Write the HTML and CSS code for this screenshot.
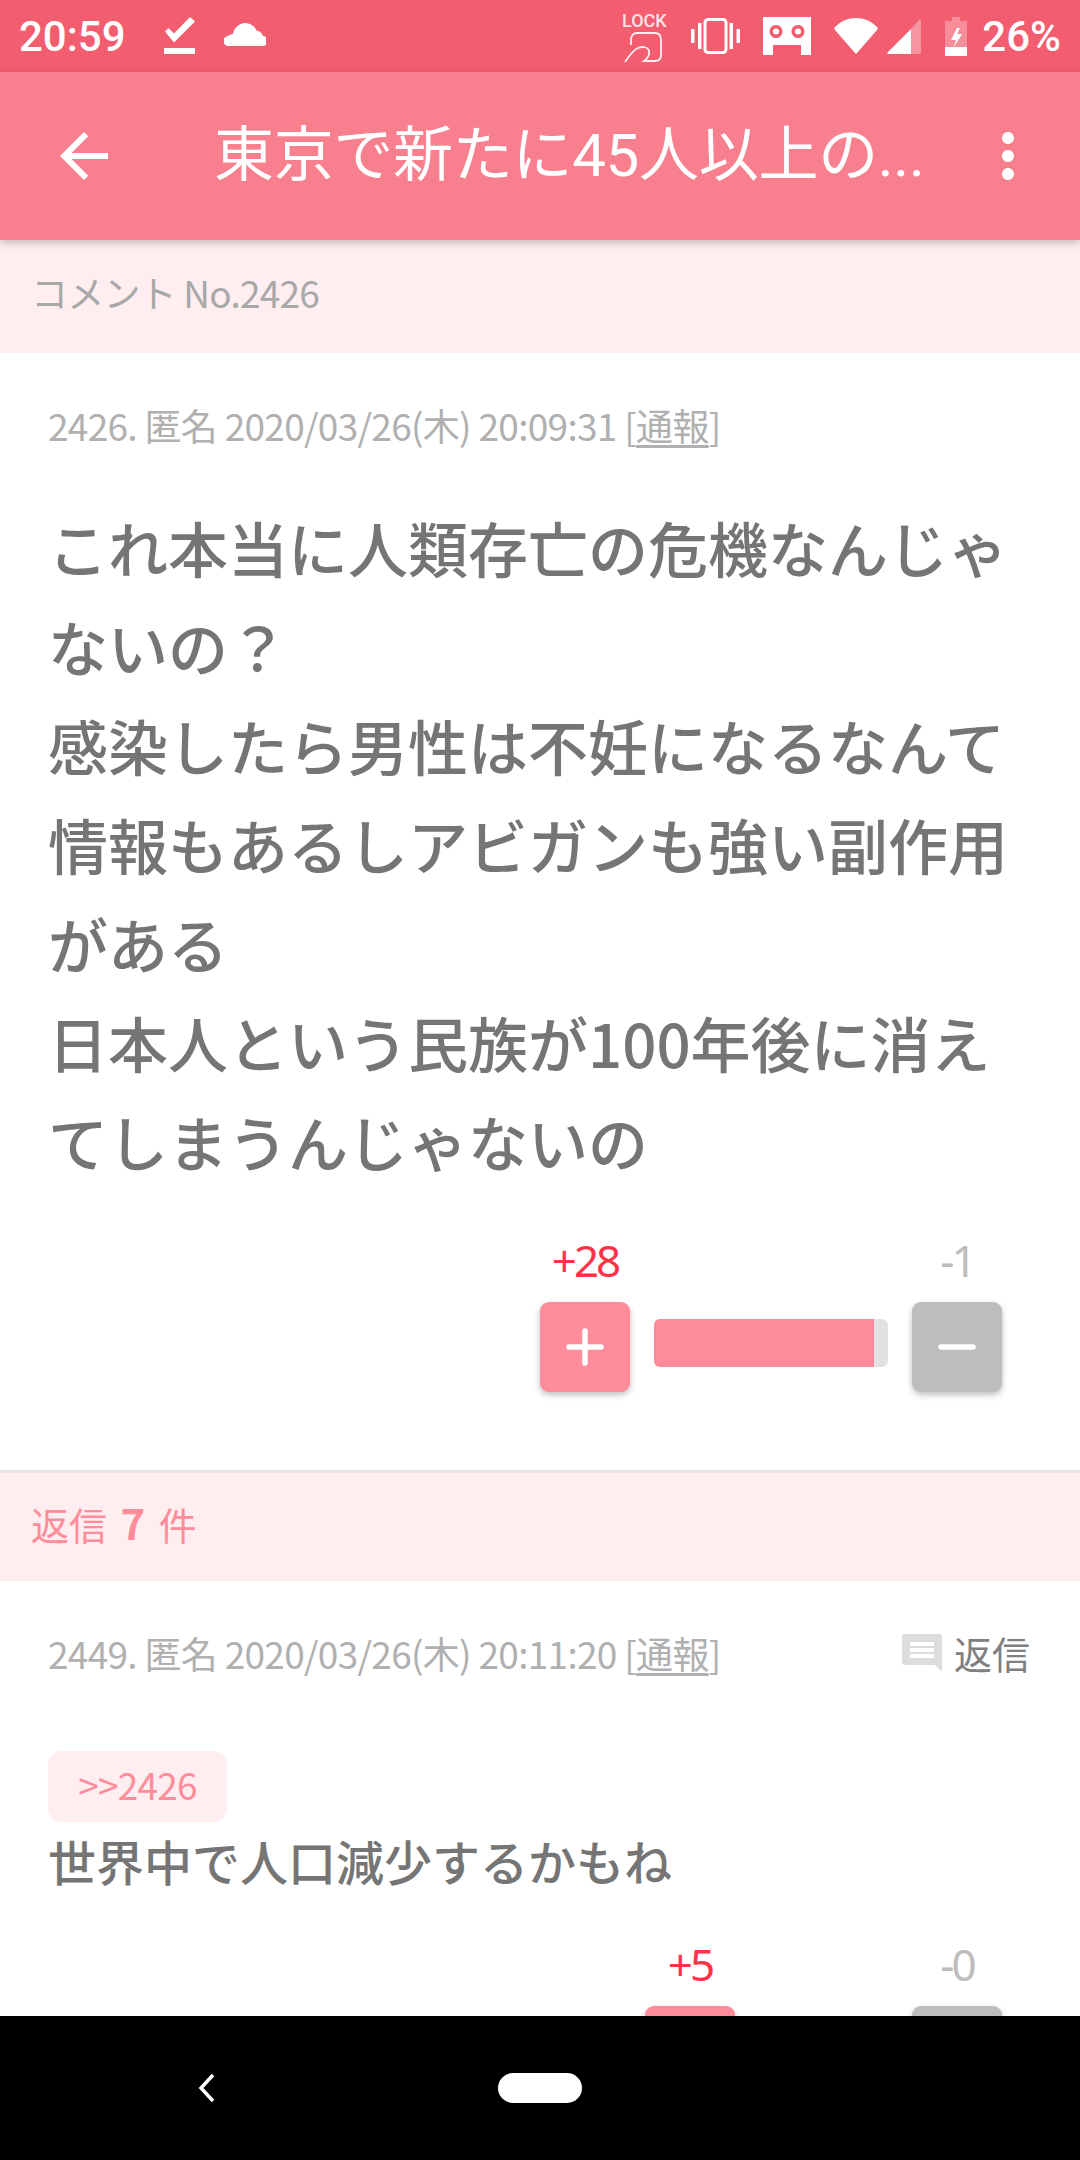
FILE: index.html
```html
<!DOCTYPE html>
<html lang="ja">
<head>
  <meta charset="UTF-8">
  <meta name="viewport" content="width=device-width, initial-scale=1.0">
  <title>コメント No.2426</title>
  <link rel="stylesheet" href="styles.css">
</head>
<body>
  <div class="screen">
    <!-- ステータスバー -->
    <div class="status-bar">
      <span class="status-time">20:59</span>
      <svg class="icon-checks" viewBox="0 0 31 37"><path d="M1 14.500 4.500 11 10 16.500 26 0 31 4.500 10 25.500z" fill="#fff"/><rect x="0" y="31" width="31" height="6" fill="#fff"/></svg>
      <svg class="icon-cloud" viewBox="0 0 42 23"><path d="M5 23a4 4 0 0 1-1-10c1-1 3-2 5-2 1-6 6-11 12-11 6 0 10 4 12 8 3 0 5 2 6 5a4 4 0 0 1 0 10z" fill="#fff"/></svg>
      <div class="status-right">
        <div class="lock-rotate">
          <span class="lock-label">LOCK</span>
          <svg class="icon-rotate" viewBox="0 0 40 31"><path d="M7 13V8c0-4 2-7 6-7h18c5 0 6 3 6 7v15c0 4-2 6-6 6H20c4-3 6-6 5-10-1-4-6-5-11-3C9 18 5 24 1 30" fill="none" stroke="#fff" stroke-width="1.800" opacity=".9"/></svg>
        </div>
        <svg class="icon-vibrate" viewBox="0 0 49 36"><rect x="14" y="1.500" width="21" height="33" rx="3" fill="none" stroke="#fff" stroke-width="3"/><path d="M0 11h3.500v14H0zM7 5h3.500v26H7zM38.500 5H42v26h-3.500zM45.500 11H49v14h-3.500z" fill="#fff"/></svg>
        <svg class="icon-face" viewBox="0 0 48 38"><path fill-rule="evenodd" d="M0 0h48v38H38V28H10v10H0zM13 8a6.500 6.500 0 1 0 .01 0zM35 8a6.500 6.500 0 1 0 .01 0z" fill="#fff"/><circle cx="13" cy="14.500" r="3" fill="#fff"/><circle cx="35" cy="14.500" r="3" fill="#fff"/></svg>
        <svg class="icon-wifi" viewBox="0 0 44 36"><path d="M1 9C7 3 14 0 22 0s15 3 21 9c1 1 1 2 0 3L23 35c-.5 1-1.500 1-2 0L1 12C0 11 0 10 1 9z" fill="#fff"/></svg>
        <svg class="icon-signal" viewBox="0 0 34 35"><path d="M24 10v25H1C0 35 0 34 1 33z" fill="#fff"/><path d="M24 10 32 1c1-1 2 0 2 1v31c0 1-1 2-2 2h-8z" fill="#fff" opacity=".35"/></svg>
        <svg class="icon-battery" viewBox="0 0 22 39"><path d="M7 0h8v4h7v35H0V4h7z" fill="#fff" opacity=".3"/><path d="M0 30h22v9H0z" fill="#fff"/><path d="M12 11 6 23h5l-2 7 8-13h-5l3-6z" fill="#fff"/></svg>
        <span class="status-battery">26%</span>
      </div>
    </div>

    <!-- ヘッダー -->
    <header class="app-bar">
      <svg class="app-bar-icon" viewBox="0 0 24 24"><path d="M20 11H7.830l5.590-5.590L12 4l-8 8 8 8 1.410-1.410L7.830 13H20v-2z" fill="#fff"/></svg>
      <h1 class="app-bar-title">東京で新たに45人以上の...</h1>
      <svg class="app-bar-icon" viewBox="0 0 24 24"><path d="M12 8c1.100 0 2-.9 2-2s-.9-2-2-2-2 .9-2 2 .9 2 2 2zm0 2c-1.100 0-2 .9-2 2s.9 2 2 2 2-.9 2-2-.9-2-2-2zm0 6c-1.100 0-2 .9-2 2s.9 2 2 2 2-.9 2-2-.9-2-2-2z" fill="#fff"/></svg>
    </header>

    <main class="content">
      <div class="section-label">コメント No.2426</div>

      <article class="comment comment-main">
        <div class="comment-meta">
          <span>2426. 匿名 2020/03/26(木) 20:09:31 [<u>通報</u>]</span>
        </div>
        <p class="comment-body comment-body-large">これ本当に人類存亡の危機なんじゃ<br>ないの？<br>感染したら男性は不妊になるなんて<br>情報もあるしアビガンも強い副作用<br>がある<br>日本人という民族が100年後に消え<br>てしまうんじゃないの</p>
        <div class="vote">
          <span class="vote-count vote-plus">+28</span>
          <span></span>
          <span class="vote-count vote-minus">-1</span>
          <button class="vote-btn vote-btn-plus"><svg viewBox="0 0 38 38"><path d="M19 3v32M3 19h32" stroke="#fff" stroke-width="5.500" stroke-linecap="round"/></svg></button>
          <div class="vote-bar"><div class="vote-bar-fill" style="width: 94%"></div></div>
          <button class="vote-btn vote-btn-minus"><svg viewBox="0 0 38 38"><path d="M3 19h32" stroke="#fff" stroke-width="5.500" stroke-linecap="round"/></svg></button>
        </div>
      </article>

      <div class="section-label section-label-reply">返信 <b>7</b> 件</div>

      <article class="comment comment-reply">
        <div class="comment-meta">
          <span>2449. 匿名 2020/03/26(木) 20:11:20 [<u>通報</u>]</span>
          <span class="reply-link">
            <svg class="icon-reply" viewBox="0 0 40 38"><path fill-rule="evenodd" d="M3 0h34c2 0 3 1 3 3v35l-7-7H3c-2 0-3-1-3-3V3c0-2 1-3 3-3zM8 8v4h24V8zM8 14v4h24v-4zM8 20v4h24v-4z" fill="#dcdcdc"/></svg>
            返信
          </span>
        </div>
        <a class="anchor-tag">&gt;&gt;2426</a>
        <p class="comment-body">世界中で人口減少するかもね</p>
        <div class="vote vote-short">
          <span class="vote-count vote-plus">+5</span>
          <span></span>
          <span class="vote-count vote-minus">-0</span>
          <button class="vote-btn vote-btn-plus"></button>
          <div class="vote-bar"><div class="vote-bar-fill" style="width: 100%"></div></div>
          <button class="vote-btn vote-btn-minus"></button>
        </div>
      </article>
    </main>

    <!-- ナビゲーションバー -->
    <nav class="nav-bar">
      <svg class="nav-back" viewBox="0 0 18 30"><path d="M15 2 3 15l12 13" fill="none" stroke="#fff" stroke-width="3.500"/></svg>
      <div class="nav-home"></div>
    </nav>
  </div>
</body>
</html>
```

FILE: styles.css
```css
* {
  box-sizing: border-box;
}
body {
  margin: 0;
  padding: 0;
  background-color: #ffffff;
  font-family: "Noto Sans CJK JP", "Noto Sans", sans-serif;
  color: #757575;
}
.screen {
  width: 1080px;
  height: 2160px;
  display: flex;
  flex-direction: column;
  overflow: hidden;
}

/* Status bar */
.status-bar {
  height: 72px;
  flex: none;
  display: flex;
  align-items: center;
  padding: 0 19px 0 19px;
  background-color: #f25d6f;
  color: white;
  font-family: Roboto, sans-serif;
  font-size: 42px;
  font-weight: 500;
}
.status-time {
  width: 145px;
}
.icon-checks {
  width: 31px;
  height: 37px;
  margin-top: -1px;
}
.icon-cloud {
  width: 42px;
  height: 23px;
  margin-left: 29px;
  margin-top: -3px;
}
.status-right {
  margin-left: auto;
  display: flex;
  align-items: center;
}
.lock-rotate {
  width: 46px;
  display: flex;
  flex-direction: column;
  align-items: center;
  margin-top: 2px;
}
.lock-label {
  font-size: 18px;
  line-height: 18px;
  color: #ffe3e6;
}
.icon-rotate {
  width: 40px;
  height: 31px;
  margin-top: 2px;
}
.icon-vibrate {
  width: 49px;
  height: 36px;
  margin-left: 24px;
}
.icon-face {
  width: 48px;
  height: 38px;
  margin-left: 23px;
}
.icon-wifi {
  width: 44px;
  height: 36px;
  margin-left: 23px;
  margin-top: -1px;
}
.icon-signal {
  width: 34px;
  height: 35px;
  margin-left: 9px;
  margin-top: 1px;
}
.icon-battery {
  width: 22px;
  height: 39px;
  margin-left: 24px;
}
.status-battery {
  margin-left: 15px;
}

/* App bar */
.app-bar {
  height: 168px;
  flex: none;
  display: flex;
  align-items: center;
  padding: 0 36px 0 48px;
  background-color: #f8808e;
  box-shadow: 0 3px 8px rgba(0, 0, 0, 0.22);
  position: relative;
}
.app-bar-icon {
  width: 72px;
  height: 72px;
  flex: none;
}
.app-bar-title {
  flex: 1;
  margin: 0 0 0 94px;
  font-family: Roboto, "Noto Sans CJK JP", sans-serif;
  font-size: 60px;
  font-weight: 400;
  line-height: 80px;
  letter-spacing: -0.3px;
  color: white;
  white-space: nowrap;
}

/* Content */
.content {
  flex: 1;
  min-height: 0;
  overflow: hidden;
}
.section-label {
  height: 113px;
  padding: 28px 0 0 31px;
  background-color: #ffeef0;
  color: #a8a8a8;
  font-size: 37px;
  line-height: 48px;
  letter-spacing: -0.8px;
}
.section-label-reply {
  height: 108px;
  padding-top: 25px;
  color: #ff8c9a;
  letter-spacing: 0;
  font-size: 38px;
  word-spacing: 5px;
}
.section-label-reply b {
  font-size: 42px;
}
.comment {
  padding: 0 48px;
}
.comment-main {
  height: 1120px;
  border-bottom: 3px solid #e8e4e6;
  padding-top: 48px;
}
.comment-reply {
  padding-top: 48px;
}
.comment-meta {
  display: flex;
  justify-content: space-between;
  align-items: center;
  height: 48px;
  font-size: 37px;
  line-height: 48px;
  letter-spacing: -0.7px;
  color: #b0b0b0;
  margin-right: 2px;
}
.comment-meta u {
  text-underline-offset: 4px;
}
.reply-link {
  display: flex;
  align-items: center;
  color: #808080;
  font-size: 38px;
  letter-spacing: 0;
}
.icon-reply {
  width: 40px;
  height: 38px;
  margin-right: 12px;
}
.comment-body {
  margin: 0;
  font-size: 48px;
  font-weight: 500;
  line-height: 76px;
  color: #757575;
}
.comment-body-large {
  margin-top: 48px;
  font-size: 60px;
  line-height: 99px;
}
.anchor-tag {
  display: block;
  height: 71px;
  width: 179px;
  margin-top: 74px;
  background-color: #ffeef0;
  border-radius: 14px;
  color: #ff8c9a;
  font-size: 37px;
  line-height: 66px;
  text-align: center;
  letter-spacing: -0.8px;
}

/* Vote */
.vote {
  display: grid;
  grid-template-columns: 90px 234px 90px;
  grid-template-rows: 60px 90px;
  column-gap: 24px;
  row-gap: 12px;
  justify-content: end;
  padding-right: 30px;
  margin-top: 40px;
}
.vote-short {
  grid-template-columns: 90px 129px 90px;
  margin-top: 36px;
}
.vote-count {
  text-align: center;
  font-family: "Noto Sans", sans-serif;
  font-size: 44px;
  line-height: 60px;
  letter-spacing: -3px;
}
.vote-plus {
  color: #ff3347;
}
.vote-minus {
  color: #bdbdbd;
}
.vote-btn {
  display: flex;
  align-items: center;
  justify-content: center;
  padding: 0;
  border: none;
  border-radius: 9px;
  box-shadow: 0 3px 6px rgba(0, 0, 0, 0.25);
}
.vote-btn svg {
  width: 38px;
  height: 38px;
}
.vote-btn-plus {
  background-color: #ff8c9a;
}
.vote-btn-minus {
  background-color: #bdbdbd;
}
.vote-bar {
  height: 48px;
  margin-top: 17px;
  border-radius: 6px;
  background-color: #e2e2e2;
  overflow: hidden;
}
.vote-bar-fill {
  height: 100%;
  background-color: #ff8c9a;
}

/* Nav bar */
.nav-bar {
  height: 144px;
  flex: none;
  background-color: #000000;
  display: flex;
  align-items: center;
  padding-left: 198px;
  position: relative;
}
.nav-back {
  width: 18px;
  height: 30px;
}
.nav-home {
  width: 84px;
  height: 30px;
  margin-left: 282px;
  border-radius: 15px;
  background-color: white;
}
```
